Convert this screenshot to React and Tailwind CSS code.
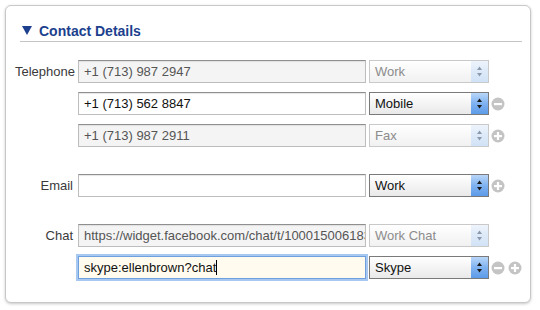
import React from "react";

function Arrows({ active }) {
  const c = active ? "#1a1a1a" : "#8a99ad";
  return (
    <svg width="7" height="11" viewBox="0 0 7 11">
      <path d="M3.5 0.5 L6 4 L1 4 Z" fill={c} />
      <path d="M1 7 L6 7 L3.5 10.5 Z" fill={c} />
    </svg>
  );
}

function Select({ value, active }) {
  return (
    <div
      className={
        "w-[120px] h-[23px] flex border shrink-0 " +
        (active
          ? "border-[#7a7a7a] bg-gradient-to-b from-white to-[#e9e9e9] text-[#111]"
          : "border-[#c9c9c9] bg-gradient-to-b from-white to-[#f1f1f1] text-[#8c8c8c]")
      }
    >
      <div className="flex-1 pl-[5px] leading-[21px] text-[13px]">{value}</div>
      <div
        className={
          "w-[17px] flex items-center justify-center " +
          (active
            ? "bg-gradient-to-b from-[#b9d6f8] via-[#7fb2f0] to-[#5d9be9]"
            : "bg-gradient-to-b from-[#eef4fc] via-[#dde9f8] to-[#d2e3f7]")
        }
      >
        <Arrows active={active} />
      </div>
    </div>
  );
}

function Minus() {
  return (
    <svg width="14" height="14" viewBox="0 0 14 14">
      <circle cx="7" cy="7" r="6.5" fill="#c4c4c4" />
      <rect x="3" y="6" width="8" height="2.2" fill="#fff" />
    </svg>
  );
}

function Plus() {
  return (
    <svg width="14" height="14" viewBox="0 0 14 14">
      <circle cx="7" cy="7" r="6.5" fill="#c4c4c4" />
      <rect x="3" y="6" width="8" height="2.2" fill="#fff" />
      <rect x="5.9" y="3" width="2.2" height="8" fill="#fff" />
    </svg>
  );
}

function Field({ value, kind }) {
  const styles = {
    readonly:
      "bg-[#f4f4f4] text-[#555] border-[#bdbdbd] border-t-[#8f8f8f] shadow-[inset_0_1px_1px_rgba(0,0,0,0.08)]",
    edit: "bg-white text-[#111] border-[#bdbdbd] border-t-[#8f8f8f] shadow-[inset_0_1px_1px_rgba(0,0,0,0.1)]",
    focus:
      "bg-[#fffcef] text-[#111] border-[#6f9fdc] shadow-[0_0_0_2px_#a7c8f1]",
  };
  return (
    <div
      className={
        "w-[288px] h-[23px] border shrink-0 overflow-hidden whitespace-nowrap pl-[5px] text-[13px] leading-[21px] " +
        styles[kind]
      }
    >
      {value}
      {kind === "focus" && (
        <span className="inline-block w-px h-[15px] bg-black align-[-3px]" />
      )}
    </div>
  );
}

function Row({ label, value, kind, type, active, icons = [] }) {
  return (
    <div className="flex items-center">
      <div className="w-[58px] text-right text-[13px] text-[#3a3a3a] shrink-0">
        {label}
      </div>
      <div className="w-[5px]" />
      <Field value={value} kind={kind} />
      <div className="w-[3px]" />
      <Select value={type} active={active} />
      <div className="flex gap-[3px] ml-[2px]">
        {icons.map((i, n) => (i === "-" ? <Minus key={n} /> : <Plus key={n} />))}
      </div>
    </div>
  );
}

export default function App() {
  return (
    <div className="bg-white w-[540px] h-[310px] pt-[5px] pl-[5px] font-['Liberation_Sans',Arial,sans-serif]">
      <div className="w-[526px] h-[298px] border border-[#c8c8c8] rounded-[6px] shadow-[0_1px_3px_rgba(0,0,0,0.22)] bg-white">
        <div className="ml-[14px] mt-[15px] mr-[8px] h-[21px] border-b border-[#c4c4c4] flex items-center pb-[1px] text-[14px] font-bold text-[#1c3f8e] leading-[20px]">
          <svg width="10" height="9" viewBox="0 0 10 9" className="ml-[2px] mr-[7px]">
            <path d="M0 0 L10 0 L5 9 Z" fill="#1c3f8e" />
          </svg>
          Contact Details
        </div>
        <div className="pl-[9px] mt-[18px] flex flex-col">
          <div className="flex flex-col gap-[9px]">
            <Row label="Telephone" value="+1 (713) 987 2947" kind="readonly" type="Work" />
            <Row label="" value="+1 (713) 562 8847" kind="edit" type="Mobile" active icons={["-"]} />
            <Row label="" value="+1 (713) 987 2911" kind="readonly" type="Fax" icons={["+"]} />
          </div>
          <div className="mt-[27px]">
            <Row label="Email" value="" kind="edit" type="Work" active icons={["+"]} />
          </div>
          <div className="mt-[27px] flex flex-col gap-[9px]">
            <Row
              label="Chat"
              value="https://widget.facebook.com/chat/t/100015006183"
              kind="readonly"
              type="Work Chat"
            />
            <Row label="" value="skype:ellenbrown?chat" kind="focus" type="Skype" active icons={["-", "+"]} />
          </div>
        </div>
      </div>
    </div>
  );
}
